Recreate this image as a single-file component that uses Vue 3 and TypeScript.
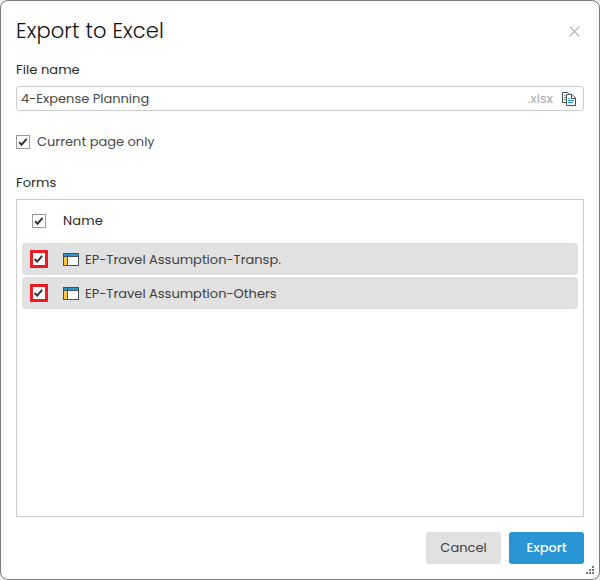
<script setup lang="ts">
import { ref } from 'vue'

interface FormItem {
  name: string
  selected: boolean
}

const fileName = ref('4-Expense Planning')
const currentPageOnly = ref(true)
const allSelected = ref(true)
const forms = ref<FormItem[]>([
  { name: 'EP-Travel Assumption-Transp.', selected: true },
  { name: 'EP-Travel Assumption-Others', selected: true },
])
</script>

<template>
  <section class="dialog">
    <header class="head">
      <h1 class="title">Export to Excel</h1>
      <button class="close" aria-label="Close">
        <svg width="11" height="11" viewBox="0 0 11 11"><path d="M.7.7l9.6 9.6M10.3.7L.7 10.3" fill="none" stroke="#aaa" stroke-width="1.1" /></svg>
      </button>
    </header>

    <div class="label file-label">File name</div>
    <div class="field">
      <span class="value">{{ fileName }}</span>
      <span class="ext">.xlsx</span>
      <svg class="copy" width="14" height="14" viewBox="0 0 14 14">
        <path d="M4 10.5H.5V.5H6L7.5 2" fill="#fff" stroke="#465156" />
        <path d="M2 3.5h1.5M2 5.5h2M2 7.5h2" stroke="#2895d5" />
        <path d="M4.5 2.5h5.5l3.5 3.5v7.5h-9z" fill="#fff" stroke="#465156" />
        <path d="M9.5 2.5v4h4" fill="none" stroke="#465156" />
        <path d="M6 6.5h2M6 8.5h6M6 10.5h5" stroke="#2895d5" />
      </svg>
    </div>

    <div class="option" @click="currentPageOnly = !currentPageOnly">
      <span class="box"><svg v-if="currentPageOnly" width="12" height="12" viewBox="0 0 12 12"><path d="M2 6.1l2.6 2.6 5-5.8" /></svg></span>
      <span>Current page only</span>
    </div>

    <div class="label forms-label">Forms</div>
    <div class="table">
      <div class="table-head">
        <span class="box"><svg v-if="allSelected" width="12" height="12" viewBox="0 0 12 12"><path d="M2 6.1l2.6 2.6 5-5.8" /></svg></span>
        <span>Name</span>
      </div>
      <div v-for="form in forms" :key="form.name" class="row" @click="form.selected = !form.selected">
        <span class="box marked"><svg v-if="form.selected" width="12" height="12" viewBox="0 0 12 12"><path d="M1.6 6l2.6 2.6 5-5.8" /></svg></span>
        <svg class="form-icon" width="16" height="13" viewBox="0 0 16 13">
          <path d="M0 0h16v13H0z" fill="#465156" />
          <path d="M1 1h3v2H1zM5 1h10v2H5z" fill="#2895d5" />
          <path d="M1 4h3v8H1z" fill="#ffc83d" />
          <path d="M5 4h10v8H5z" fill="#fff" />
        </svg>
        <span class="form-name">{{ form.name }}</span>
      </div>
    </div>

    <footer class="actions">
      <button class="btn cancel">Cancel</button>
      <button class="btn export">Export</button>
    </footer>
    <svg class="grip" width="8" height="8" viewBox="0 0 8 8"><path d="M6 0h2v2H6zM3 3h2v2H3zM6 3h2v2H6zM0 6h2v2H0zM3 6h2v2H3zM6 6h2v2H6z" fill="#777" /></svg>
  </section>
</template>

<style>
body {
  background: #ececec;
}
</style>

<style scoped>
.dialog {
  position: relative;
  box-sizing: border-box;
  width: 600px;
  height: 580px;
  padding: 15px;
  border: 1px solid #7c7c7c;
  border-radius: 8px;
  background: #fff;
  color: #484848;
  font: 400 13px/20px Poppins, Inter, sans-serif;
  display: flex;
  flex-direction: column;
  white-space: nowrap;
}
button {
  border: 0;
  padding: 0;
  font: inherit;
  background: none;
}
.head {
  display: flex;
  justify-content: space-between;
  height: 30px;
}
.title {
  margin: 0;
  font-size: 21px;
  line-height: 30px;
  font-weight: 300;
  letter-spacing: 0.1px;
  color: #111;
}
.close {
  width: 11px;
  height: 11px;
  margin: 10px 4px 0 0;
}
.close svg {
  display: block;
}
.label {
  height: 20px;
  color: #2a2a2a;
  letter-spacing: 0.08px;
}
.file-label {
  margin-top: 14px;
}
.field {
  box-sizing: border-box;
  height: 25px;
  margin-top: 6px;
  padding: 0 7px 0 4px;
  border: 1px solid #ccc;
  border-radius: 3px;
  display: flex;
  align-items: center;
}
.value {
  flex: 1;
}
.ext {
  color: #aaa;
  margin-right: 9px;
}
.copy {
  margin-top: 1px;
}
.option {
  height: 20px;
  margin-top: 21px;
  display: flex;
  align-items: center;
  gap: 7px;
}
.box {
  box-sizing: border-box;
  width: 14px;
  height: 14px;
  border: 1px solid #999;
  background: #fff;
  flex: none;
}
.box svg {
  display: block;
}
.box path {
  fill: none;
  stroke: #333;
  stroke-width: 2;
}
.box.marked {
  width: 18px;
  height: 18px;
  border: 3px solid #eb1c24;
}
.forms-label {
  margin-top: 21px;
}
.table {
  box-sizing: border-box;
  height: 318px;
  margin-top: 6px;
  border: 1px solid #ccc;
  padding: 0 5px;
}
.table-head {
  height: 43px;
  padding: 0 0 1px 10px;
  box-sizing: border-box;
  display: flex;
  align-items: center;
  gap: 17px;
  color: #2a2a2a;
  letter-spacing: 0.15px;
}
.row {
  height: 32px;
  margin-bottom: 2px;
  padding-left: 8px;
  border-radius: 4px;
  background: #e1e1e1;
  color: #404040;
  display: flex;
  align-items: center;
}
.form-icon {
  margin: 1px 6px 0 15px;
}
.form-name {
  padding-top: 1px;
}
.actions {
  margin-top: 15px;
  display: flex;
  justify-content: flex-end;
  gap: 8px;
}
.btn {
  width: 75px;
  height: 32px;
  border-radius: 3px;
}
.cancel {
  background: #e1e1e1;
  color: #404040;
}
.export {
  background: #2895d5;
  color: #fff;
  font-weight: 500;
}
.grip {
  position: absolute;
  right: 5px;
  bottom: 5px;
}
</style>
